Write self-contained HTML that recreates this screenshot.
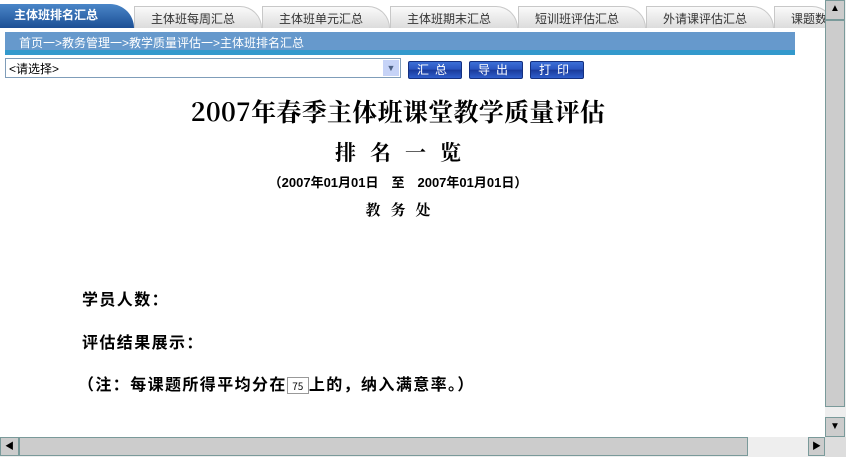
<!DOCTYPE html>
<html><head><meta charset="utf-8"><style>
body{margin:0;width:846px;height:457px;overflow:hidden;background:#fff;position:relative;font-family:"Liberation Sans","SimSun","Noto Sans CJK SC",sans-serif;}
.a{position:absolute}
.tab{position:absolute;top:6px;height:22px;width:128px;background:linear-gradient(#fafafa,#dcdcdc);border-top-right-radius:22px 22px;border:1px solid #c8c8c8;border-bottom:none;box-sizing:border-box;font-size:12px;color:#333;padding:3px 0 0 16px;}
.btn{position:absolute;top:61px;width:54px;height:18px;background:linear-gradient(#3c6fd6 0,#2a55c0 45%,#1a3a9a 50%,#2f5ecc 100%);border:1px solid #143080;border-radius:2px;box-sizing:border-box;color:#fff;font-size:12px;text-align:center;line-height:16px;letter-spacing:6px;}
.cjk{font-family:"Noto Serif CJK SC","Liberation Serif",serif;font-weight:bold;}
.b{font-family:"Noto Sans CJK SC",sans-serif;font-weight:bold;font-size:16px;color:#000;letter-spacing:1.4px}
</style></head><body>
<div class="a" style="left:0;top:4px;width:134px;height:24px;background:linear-gradient(#4a86c8,#1c4f95);border-top-right-radius:24px;color:#fff;font-weight:bold;font-size:12px;padding:2px 0 0 14px;box-sizing:border-box;font-family:'Noto Sans CJK SC',sans-serif">主体班排名汇总</div>
<div class="tab" style="left:134px">主体班每周汇总</div>
<div class="tab" style="left:262px">主体班单元汇总</div>
<div class="tab" style="left:390px">主体班期末汇总</div>
<div class="tab" style="left:518px">短训班评估汇总</div>
<div class="tab" style="left:646px">外请课评估汇总</div>
<div class="tab" style="left:774px;width:60px">课题数</div>
<div class="a" style="left:5px;top:32px;width:790px;height:18px;background:#6699cc;color:#fff;font-size:12px;padding:2px 0 0 14px;box-sizing:border-box">首页一&gt;教务管理一&gt;教学质量评估一&gt;主体班排名汇总</div>
<div class="a" style="left:5px;top:50px;width:790px;height:5px;background:#3399cc"></div>
<div class="a" style="left:5px;top:58px;width:396px;height:20px;border:1px solid #7f9db9;box-sizing:border-box;font-size:12px;padding:1px 3px">&lt;请选择&gt;</div>
<div class="a" style="left:383px;top:60px;width:16px;height:16px;background:#c6d3f7;font-size:9px;color:#4d6185;text-align:center;line-height:16px">&#9660;</div>
<div class="btn" style="left:408px">汇总</div>
<div class="btn" style="left:469px">导出</div>
<div class="btn" style="left:530px">打印</div>
<div class="a cjk" style="left:0;width:796px;top:96px;text-align:center;font-size:25px;line-height:31px;letter-spacing:0.3px">2007年春季主体班课堂教学质量评估</div>
<div class="a cjk" style="left:0;width:796px;top:138px;text-align:center;font-size:21px;line-height:28px;letter-spacing:14px;padding-left:14px;box-sizing:border-box">排名一览</div>
<div class="a" style="left:0;width:796px;top:174px;text-align:center;font-size:13px;line-height:18px;font-weight:bold;font-family:'Liberation Sans','Noto Sans CJK SC',sans-serif">（2007年01月01日　至　2007年01月01日）</div>
<div class="a cjk" style="left:0;width:796px;top:200px;text-align:center;font-size:15px;line-height:20px;letter-spacing:10px;padding-left:10px;box-sizing:border-box">教务处</div>
<div class="a b" style="left:82px;top:286px">学员人数：</div>
<div class="a b" style="left:82px;top:329px">评估结果展示：</div>
<div class="a b" style="left:78px;top:371px">（注：每课题所得平均分在<span style="display:inline-block;width:22px;height:17px;border:1px solid #999;font-size:10px;font-weight:normal;line-height:15px;text-align:center;vertical-align:middle;box-sizing:border-box;letter-spacing:0">75</span>上的，纳入满意率。）</div>
<div class="a" style="left:825px;top:0;width:21px;height:437px;background:#eee"></div>
<div class="a" style="left:825px;top:0;width:20px;height:20px;background:#ccc;border:1px solid #7a9a9a;box-sizing:border-box;font-size:10px;text-align:center;line-height:16px">&#9650;</div>
<div class="a" style="left:825px;top:20px;width:20px;height:387px;background:#ccc;border:1px solid #7a9a9a;box-sizing:border-box"></div>
<div class="a" style="left:825px;top:417px;width:20px;height:20px;background:#ccc;border:1px solid #7a9a9a;box-sizing:border-box;font-size:10px;text-align:center;line-height:18px">&#9660;</div>
<div class="a" style="left:0;top:437px;width:846px;height:20px;background:#eee"></div>
<div class="a" style="left:0;top:437px;width:19px;height:19px;background:#ccc;border:1px solid #7a9a9a;box-sizing:border-box;font-size:9px;text-align:center;line-height:17px">&#9664;</div>
<div class="a" style="left:19px;top:437px;width:729px;height:19px;background:#ccc;border:1px solid #7a9a9a;box-sizing:border-box"></div>
<div class="a" style="left:808px;top:437px;width:17px;height:19px;background:#ccc;border:1px solid #7a9a9a;box-sizing:border-box;font-size:9px;text-align:center;line-height:17px">&#9654;</div>
<div class="a" style="left:825px;top:437px;width:21px;height:20px;background:#ddd"></div>
</body></html>
